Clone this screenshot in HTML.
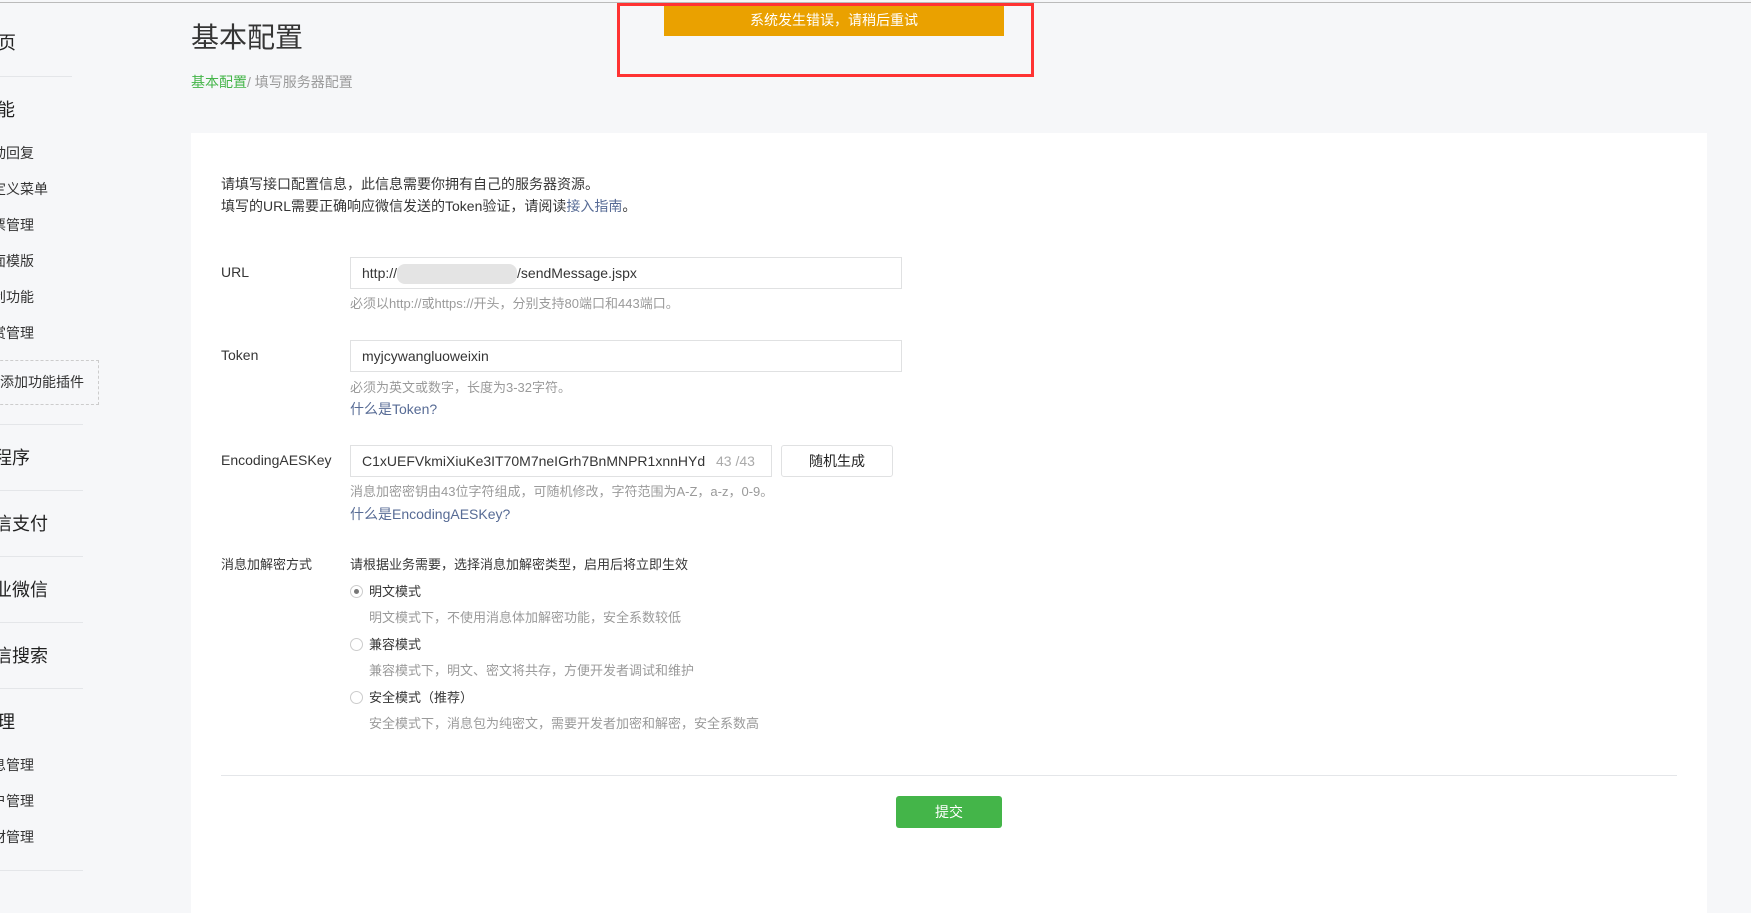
<!DOCTYPE html>
<html><head><meta charset="utf-8"><style>
*{margin:0;padding:0;box-sizing:border-box}
body{width:1751px;height:893px;overflow:hidden;background:#f6f7f9;font-family:"Liberation Sans","Noto Sans CJK SC",sans-serif;color:#353535;position:relative}
.a{position:absolute;white-space:nowrap}
.big{font-size:18px;line-height:20px;color:#222}
.sub{font-size:14px;line-height:16px;color:#333}
.hr{position:absolute;left:0;width:83px;height:1px;background:#e4e6e9}
.f{font-size:14px;line-height:16px}
.hint{font-size:13px;line-height:16px;color:#9a9a9a}
.lnk{font-size:14px;line-height:16px;color:#576b95}
.inp{position:absolute;height:32px;border:1px solid #e0e1e2;background:#fff;font-size:14px;line-height:30px;padding-left:11px;color:#353535;overflow:hidden}
.rad{position:absolute;width:13px;height:13px;border:1px solid #ccc;border-radius:50%;background:#fff}
</style></head><body>
<div class="a" style="left:0;top:2px;width:1751px;height:1px;background:#bbb"></div>
<!-- sidebar -->
<div class="a big" style="left:-20px;top:33px">首页</div>
<div class="hr" style="top:76px;width:72px"></div>
<div class="a big" style="left:-21px;top:100px">功能</div>
<div class="a sub" style="left:-22px;top:145px">自动回复</div>
<div class="a sub" style="left:-22px;top:181px">自定义菜单</div>
<div class="a sub" style="left:-22px;top:217px">投票管理</div>
<div class="a sub" style="left:-22px;top:253px">页面模版</div>
<div class="a sub" style="left:-22px;top:289px">原创功能</div>
<div class="a sub" style="left:-22px;top:325px">赞赏管理</div>
<div class="a" style="left:-20px;top:360px;width:119px;height:45px;border:1px dashed #ccc"></div>
<div class="a sub" style="left:0;top:374px">添加功能插件</div>
<div class="hr" style="top:424px"></div>
<div class="a big" style="left:-24px;top:448px">小程序</div>
<div class="hr" style="top:490px"></div>
<div class="a big" style="left:-24px;top:514px">微信支付</div>
<div class="hr" style="top:556px"></div>
<div class="a big" style="left:-24px;top:580px">企业微信</div>
<div class="hr" style="top:622px"></div>
<div class="a big" style="left:-24px;top:646px">微信搜索</div>
<div class="hr" style="top:688px"></div>
<div class="a big" style="left:-21px;top:712px">管理</div>
<div class="a sub" style="left:-22px;top:757px">消息管理</div>
<div class="a sub" style="left:-22px;top:793px">用户管理</div>
<div class="a sub" style="left:-22px;top:829px">素材管理</div>
<div class="hr" style="top:870px"></div>
<!-- header -->
<div class="a" style="left:191px;top:22px;font-size:28px;line-height:32px;color:#353535">基本配置</div>
<div class="a" style="left:191px;top:74px;font-size:14px;line-height:16px;color:#9a9a9a"><span style="color:#44b549">基本配置</span>/ 填写服务器配置</div>
<!-- card -->
<div class="a" style="left:191px;top:133px;width:1516px;height:780px;background:#fff"></div>
<div class="a f" style="left:221px;top:176px;color:#353535">请填写接口配置信息，此信息需要你拥有自己的服务器资源。</div>
<div class="a f" style="left:221px;top:198px;color:#353535">填写的URL需要正确响应微信发送的Token验证，请阅读<span style="color:#576b95">接入指南</span>。</div>

<div class="a f" style="left:221px;top:264px">URL</div>
<div class="inp" style="left:350px;top:257px;width:552px">http://<span style="display:inline-block;width:120px;height:20px;vertical-align:middle;background:#e4e4e4;border-radius:8px"></span>/sendMessage.jspx</div>
<div class="a hint" style="left:350px;top:296px">必须以http://或https://开头，分别支持80端口和443端口。</div>

<div class="a f" style="left:221px;top:347px">Token</div>
<div class="inp" style="left:350px;top:340px;width:552px">myjcywangluoweixin</div>
<div class="a hint" style="left:350px;top:380px">必须为英文或数字，长度为3-32字符。</div>
<div class="a lnk" style="left:350px;top:401px">什么是Token?</div>

<div class="a f" style="left:221px;top:452px">EncodingAESKey</div>
<div class="inp" style="left:350px;top:445px;width:422px"><span style="display:inline-block;width:360px;overflow:hidden;vertical-align:top">C1xUEFVkmiXiuKe3IT70M7neIGrh7BnMNPR1xnnHYd</span></div>
<div class="a" style="left:716px;top:453px;font-size:14px;line-height:16px;color:#aaa">43 /43</div>
<div class="a" style="left:781px;top:445px;width:112px;height:32px;border:1px solid #e0e1e2;border-radius:3px;background:#fff;font-size:14px;line-height:30px;text-align:center;color:#222">随机生成</div>
<div class="a hint" style="left:350px;top:484px">消息加密密钥由43位字符组成，可随机修改，字符范围为A-Z，a-z，0-9。</div>
<div class="a lnk" style="left:350px;top:506px">什么是EncodingAESKey?</div>

<div class="a" style="left:221px;top:557px;font-size:13px;line-height:16px">消息加解密方式</div>
<div class="a" style="left:350px;top:557px;font-size:13px;line-height:16px">请根据业务需要，选择消息加解密类型，启用后将立即生效</div>
<div class="rad" style="left:350px;top:585px"><div style="position:absolute;left:3px;top:3px;width:5px;height:5px;border-radius:50%;background:#777"></div></div>
<div class="a" style="left:369px;top:584px;font-size:13px;line-height:16px">明文模式</div>
<div class="a hint" style="left:369px;top:610px">明文模式下，不使用消息体加解密功能，安全系数较低</div>
<div class="rad" style="left:350px;top:638px"></div>
<div class="a" style="left:369px;top:637px;font-size:13px;line-height:16px">兼容模式</div>
<div class="a hint" style="left:369px;top:663px">兼容模式下，明文、密文将共存，方便开发者调试和维护</div>
<div class="rad" style="left:350px;top:691px"></div>
<div class="a" style="left:369px;top:690px;font-size:13px;line-height:16px">安全模式（推荐）</div>
<div class="a hint" style="left:369px;top:716px">安全模式下，消息包为纯密文，需要开发者加密和解密，安全系数高</div>

<div class="a" style="left:221px;top:775px;width:1456px;height:1px;background:#e4e6e9"></div>
<div class="a" style="left:896px;top:796px;width:106px;height:32px;background:#44b549;border-radius:3px;color:#fff;font-size:14px;line-height:32px;text-align:center">提交</div>

<!-- error -->
<div class="a" style="left:664px;top:5px;width:340px;height:31px;background:#eaa100;color:#fff;font-size:14px;line-height:31px;text-align:center">系统发生错误，请稍后重试</div>
<div class="a" style="left:617px;top:3px;width:417px;height:74px;border:3px solid #f33"></div>
</body></html>
